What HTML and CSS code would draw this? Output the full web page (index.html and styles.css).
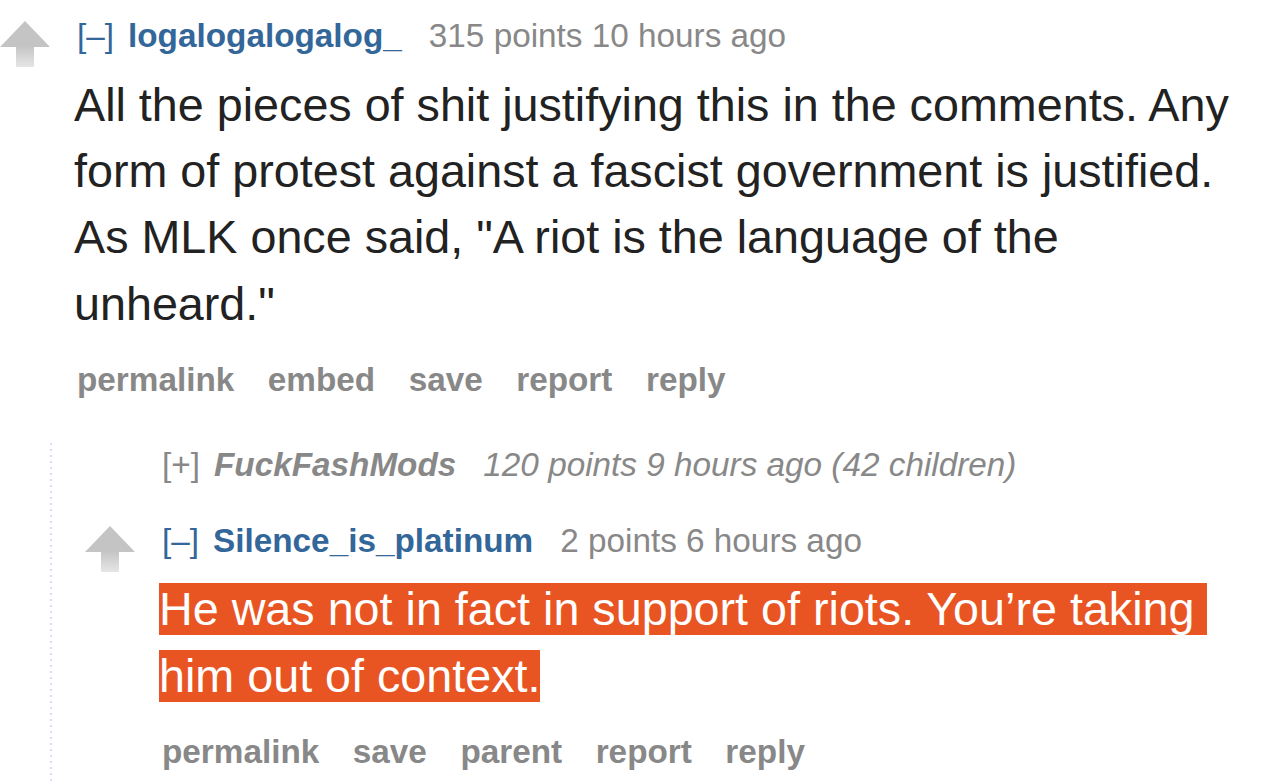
FILE: index.html
```html
<!doctype html>
<html lang="en">
  <head>
    <meta charset="UTF-8" />
    <title>comments</title>
    <link rel="stylesheet" href="styles.css">
  </head>
  <body>
    <div class="comment">
      <div class="midcol">
        <svg class="arrow" width="50" height="46" viewBox="0 0 50 46">
          <defs>
            <linearGradient id="stem1" x1="0" y1="0" x2="0" y2="1">
              <stop offset="0" stop-color="#c4c4c4" />
              <stop offset="1" stop-color="#e6e6e6" />
            </linearGradient>
          </defs>
          <path fill="#c4c4c4" d="M25 0 L50 26 L0 26 Z" />
          <rect x="16" y="25" width="18" height="21" fill="url(#stem1)" />
        </svg>
      </div>
      <div class="entry">
        <p class="tagline">
          <span class="expand">[&ndash;]</span>
          <span class="author">logalogalogalog_</span>
          <span class="score">315 points 10 hours ago</span>
        </p>
        <p class="md">All the pieces of shit justifying this in the comments. Any form of protest against a fascist government is justified. As MLK once said, "A riot is the language of the unheard."</p>
        <ul class="buttons">
          <li>permalink</li>
          <li>embed</li>
          <li>save</li>
          <li>report</li>
          <li>reply</li>
        </ul>
      </div>
    </div>

    <div class="child">
      <div class="comment collapsed">
        <div class="midcol"></div>
        <div class="entry">
          <p class="tagline">
            <span class="expand">[+]</span>
            <span class="author">FuckFashMods</span>
            <span class="score">120 points 9 hours ago (42 children)</span>
          </p>
        </div>
      </div>

      <div class="comment reply">
        <div class="midcol">
          <svg class="arrow" width="50" height="46" viewBox="0 0 50 46">
            <defs>
              <linearGradient id="stem2" x1="0" y1="0" x2="0" y2="1">
                <stop offset="0" stop-color="#c4c4c4" />
                <stop offset="1" stop-color="#e6e6e6" />
              </linearGradient>
            </defs>
            <path fill="#c4c4c4" d="M25 0 L50 26 L0 26 Z" />
            <rect x="16" y="25" width="18" height="21" fill="url(#stem2)" />
          </svg>
        </div>
        <div class="entry">
          <p class="tagline">
            <span class="expand">[&ndash;]</span>
            <span class="author">Silence_is_platinum</span>
            <span class="score">2 points 6 hours ago</span>
          </p>
          <p class="md"><span class="highlight">He was not in fact in support of riots. You’re taking him out of context.</span></p>
          <ul class="buttons">
            <li>permalink</li>
            <li>save</li>
            <li>parent</li>
            <li>report</li>
            <li>reply</li>
          </ul>
        </div>
      </div>
    </div>
  </body>
</html>
```

FILE: styles.css
```css
* {
  box-sizing: border-box;
  margin: 0;
  padding: 0;
}

html,
body {
  height: 100%;
  background: #fff;
}

body {
  display: flex;
  flex-direction: column;
  font-family: 'Liberation Sans', Arial, sans-serif;
  padding: 16px 20px 0 0;
  overflow: hidden;
}

.comment {
  display: flex;
  gap: 25px;
}

.midcol {
  width: 50px;
  flex: none;
  padding-top: 5px;
}

.arrow {
  display: block;
  filter: blur(0.5px);
}

.entry {
  flex: 1;
  min-width: 0;
}

.tagline {
  display: flex;
  align-items: baseline;
  padding-left: 2px;
  font-size: 33.3px;
  line-height: 40px;
  color: #888;
  white-space: nowrap;
}

.expand {
  color: #369;
  margin-right: 14px;
}

.author {
  color: #369;
  font-weight: bold;
  margin-right: 27px;
}

.collapsed .expand {
  color: #888;
}

.collapsed .author,
.collapsed .score {
  color: #888;
  font-style: italic;
}

.md {
  margin-top: 15.6px;
  margin-left: -1px;
  font-size: 46.7px;
  line-height: 66.4px;
  color: #222;
}

.reply .md {
  line-height: 67px;
  margin-top: 15px;
}

.highlight {
  background: #e85523;
  color: #fff;
  white-space: break-spaces;
}

.buttons {
  display: flex;
  gap: 33.5px;
  list-style: none;
  margin-top: 23px;
  padding-left: 2px;
  font-size: 33.3px;
  line-height: 40px;
  font-weight: bold;
  color: #888;
}

.reply .buttons {
  margin-top: 22px;
}

/* dotted thread line down the left of the replies */
.child {
  flex: 1;
  min-height: 0;
  margin: 43px 0 0 50px;
  padding: 2px 0 0 35px;
  background-image: linear-gradient(#dcdcf8 2px, transparent 2px);
  background-size: 2px 6px;
  background-repeat: repeat-y;
  background-position: 0 0;
}

.child .comment + .comment {
  margin-top: 36px;
}

.collapsed .midcol {
  visibility: hidden;
}
```
